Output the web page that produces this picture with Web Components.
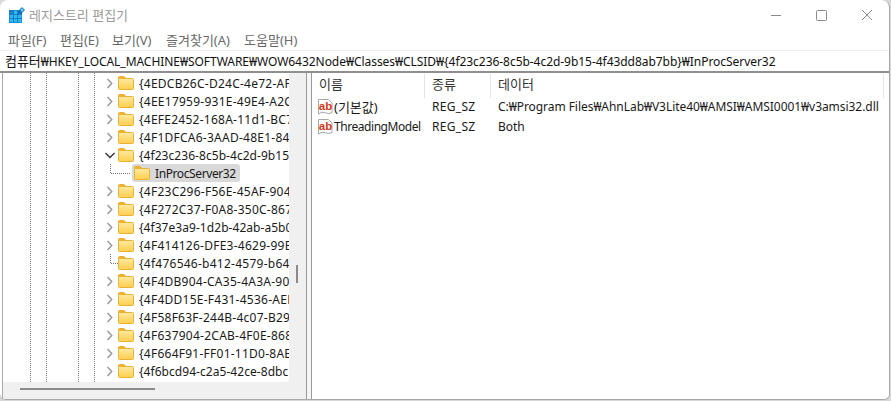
<!DOCTYPE html>
<html lang="ko">
<head>
<meta charset="utf-8">
<title>레지스트리 편집기</title>
<style>
    html, body { margin: 0; padding: 0; height: 100%; background: #d8d8d8; overflow: hidden; }
    body { font: 12px/18px "Noto Sans", "Noto Sans CJK KR", sans-serif; }
</style>
</head>
<body>
<template id="folder-tpl">
    <svg width="16" height="14" viewBox="0 0 16 14">
        <defs>
            <linearGradient id="fg" x1="0" y1="0" x2="0" y2="1">
                <stop offset="0" stop-color="#ffe9a0"/>
                <stop offset="1" stop-color="#ffcf4d"/>
            </linearGradient>
        </defs>
        <path d="M0.5 3V1.5Q0.5 0.5 1.5 0.5H6L8 2.5H12V3Z" fill="#f2b22a" stroke="#eaae2c"/>
        <rect x="0.5" y="2.5" width="15" height="11" rx="1" fill="url(#fg)" stroke="#e9b23a"/>
    </svg>
</template>
<reg-window>
    <reg-titlebar>레지스트리 편집기</reg-titlebar>
    <reg-menu>
        <span style="width:52px">파일(F)</span>
        <span style="width:52px">편집(E)</span>
        <span style="width:54px">보기(V)</span>
        <span style="width:78px">즐겨찾기(A)</span>
        <span>도움말(H)</span>
    </reg-menu>
    <reg-address><span style="font-size:13px">컴퓨터</span>₩HKEY_LOCAL_MACHINE₩SOFTWARE₩WOW6432Node₩Classes₩CLSID₩{4f23c236-8c5b-4c2d-9b15-4f43dd8ab7bb}₩InProcServer32</reg-address>
    <reg-split>
        <reg-tree slot="tree">
            <tree-row>{4EDCB26C-D24C-4e72-AF</tree-row>
            <tree-row>{4EE17959-931E-49E4-A2C</tree-row>
            <tree-row>{4EFE2452-168A-11d1-BC7</tree-row>
            <tree-row>{4F1DFCA6-3AAD-48E1-84</tree-row>
            <tree-row state="open" tight>{4f23c236-8c5b-4c2d-9b15</tree-row>
            <tree-row state="child">InProcServer32</tree-row>
            <tree-row>{4F23C296-F56E-45AF-904</tree-row>
            <tree-row>{4F272C37-F0A8-350C-867</tree-row>
            <tree-row tight>{4f37e3a9-1d2b-42ab-a5b0</tree-row>
            <tree-row>{4F414126-DFE3-4629-99E</tree-row>
            <tree-row state="leaf">{4f476546-b412-4579-b64</tree-row>
            <tree-row>{4F4DB904-CA35-4A3A-90</tree-row>
            <tree-row>{4F4DD15E-F431-4536-AEE</tree-row>
            <tree-row>{4F58F63F-244B-4c07-B29</tree-row>
            <tree-row>{4F637904-2CAB-4F0E-868</tree-row>
            <tree-row>{4F664F91-FF01-11D0-8AE</tree-row>
            <tree-row tight>{4f6bcd94-c2a5-42ce-8dbc</tree-row>
        </reg-tree>
        <reg-list slot="list">
            <list-row name="(기본값)" type="REG_SZ" data="C:₩Program Files₩AhnLab₩V3Lite40₩AMSI₩AMSI0001₩v3amsi32.dll"></list-row>
            <list-row name="ThreadingModel" type="REG_SZ" data="Both"></list-row>
        </reg-list>
    </reg-split>
</reg-window>
<script>
    function define(name, css, html, setup) {
        customElements.define(name, class extends HTMLElement {
            constructor() {
                super();
                this.attachShadow({ mode: 'open' });
                this.shadowRoot.innerHTML = `<style>${css}</style>${html}`;
            }
            connectedCallback() {
                if (setup) setup(this, this.shadowRoot);
            }
        });
    }

    define('reg-window', `
        :host {
            display: flex;
            flex-direction: column;
            width: 889px;
            height: 399px;
            margin-right: 1px;
            background: #fff;
            border-right: 1px solid #a8a8a8;
            border-bottom: 1px solid #a8a8a8;
            border-radius: 8px 8px 6px 6px;
            overflow: hidden;
            color: #1a1a1a;
        }
    `, `<slot></slot>`);

    define('reg-titlebar', `
        :host {
            display: flex;
            align-items: center;
            height: 30px;
            flex: none;
            padding-left: 9px;
            color: #9a9a9a;
            font-size: 13px;
        }
        .logo { margin-right: 4px; }
        .text { flex: 1; }
        .btns { display: flex; }
        .btns svg { display: block; width: 46px; height: 30px; }
    `, `
        <svg class="logo" width="16" height="16" viewBox="0 0 16 16">
            <rect x="0" y="3" width="13" height="13" fill="#0f6fb8"/>
            <path d="M0.5 3.5h3.5v3.5H0.5z" fill="#1b82c8"/>
            <path d="M4.8 3.5h3.5v3.5H4.8zM0.5 7.8h3.5v3.5H0.5zM4.8 7.8h3.5v3.5H4.8zM9.1 7.8h3.5v3.5H9.1zM0.5 12.1h3.5v3.5H0.5zM4.8 12.1h3.5v3.5H4.8zM9.1 12.1h3.5v3.5H9.1z" fill="#2db8f6"/>
            <path d="M13 0L16 3L13 6L10 3Z" fill="#2a8fd0"/>
            <circle cx="13" cy="3" r="1" fill="#a9defa"/>
        </svg>
        <span class="text"><slot></slot></span>
        <div class="btns">
            <svg viewBox="0 0 46 30"><path d="M20 15.5h10" stroke="#8a8a8a" fill="none"/></svg>
            <svg viewBox="0 0 46 30"><rect x="19.5" y="10.5" width="10" height="10" rx="1" stroke="#8a8a8a" fill="none"/></svg>
            <svg viewBox="0 0 46 30"><path d="M19 10l10 10M29 10L19 20" stroke="#8a8a8a" fill="none"/></svg>
        </div>
    `);

    define('reg-menu', `
        :host {
            display: flex;
            height: 20px;
            flex: none;
            align-items: center;
            padding-left: 8px;
            color: #6a6a6a;
            font-size: 13px;
            border-bottom: 1px solid #efefef;
        }
        ::slotted(span) { display: block; }
    `, `<slot></slot>`);

    define('reg-address', `
        :host {
            display: block;
            height: 20px;
            flex: none;
            padding-left: 5px;
            line-height: 20px;
            letter-spacing: -0.045px;
            white-space: nowrap;
            overflow: hidden;
            border-bottom: 2px solid #8f8f8f;
            color: #111;
        }
    `, `<slot></slot>`);

    define('reg-split', `
        :host {
            display: flex;
            flex: 1;
            min-height: 0;
            padding-left: 2px;
        }
        .left {
            display: grid;
            grid-template: 1fr 17px / 286px 17px;
            width: 303px;
            flex: none;
            border-left: 1px solid #a8a8a8;
            border-right: 1px solid #9a9a9a;
            background: #f0f0f0;
            min-height: 0;
        }
        .tree { min-height: 0; overflow: hidden; background: #fff; border-radius: 0 0 4px 0; }
        .vbar { grid-row: 1 / 3; grid-column: 2; padding: 192px 0 0 7px; box-sizing: border-box; }
        .vbar i { display: block; width: 2px; height: 18px; background: #8a8a8a; }
        .hbar { padding: 6px 0 0 17px; box-sizing: border-box; }
        .hbar i { display: block; width: 135px; height: 2px; background: #8a8a8a; }
        .gap { width: 4px; flex: none; background: #f5f5f5; }
        .right { flex: 1; min-width: 0; border-left: 1px solid #9a9a9a; background: #fff; }
    `, `
        <div class="left">
            <div class="tree"><slot name="tree"></slot></div>
            <div class="vbar"><i></i></div>
            <div class="hbar"><i></i></div>
        </div>
        <div class="gap"></div>
        <div class="right"><slot name="list"></slot></div>
    `);

    // dotted guide lines of the parent levels run through the whole pane
    const dots = 'linear-gradient(#7a7a7a 1px, transparent 1px)';
    define('reg-tree', `
        :host {
            display: block;
            height: 100%;
            padding-top: 1px;
            box-sizing: border-box;
            background-image: ${dots}, ${dots}, ${dots}, ${dots};
            background-size: 1px 2px;
            background-repeat: repeat-y;
            background-position: 27px 0, 43px 0, 75px 0, 91px 0;
            overflow: hidden;
        }
    `, `<slot></slot>`);

    define('tree-row', `
        :host {
            display: flex;
            align-items: center;
            height: 18px;
            padding-left: 103px;
            white-space: nowrap;
            color: #1a1a1a;
            letter-spacing: 0.25px;
        }
        :host([tight]) { letter-spacing: 0.05px; }
        .tw { width: 12px; height: 18px; flex: none; }
        .tw svg { display: block; overflow: visible; }
        .sel { display: flex; align-items: center; gap: 5px; }
        .sel svg { flex: none; }
        .label { padding-top: 1px; }
        :host([state=child]) { padding-left: 107px; letter-spacing: -0.4px; }
        :host([state=child]) .tw { width: 22px; }
        :host([state=child]) .sel {
            background: #d9d9d9;
            border-radius: 3px;
            height: 18px;
            padding: 0 4px 0 2px;
        }
    `, `
        <span class="tw"></span>
        <span class="sel"><span id="f" style="display:flex"></span><span class="label"><slot></slot></span></span>
    `, (el, root) => {
        const state = el.getAttribute('state');
        const tw = root.querySelector('.tw');
        root.querySelector('#f').appendChild(document.getElementById('folder-tpl').content.cloneNode(true));
        if (state === 'open') {
            tw.innerHTML = '<svg width="12" height="18"><path d="M-0.5 7L4 11.5L8.5 7" fill="none" stroke="#333" stroke-width="1.4"/></svg>';
        } else if (state === 'child') {
            tw.innerHTML = '<svg width="22" height="18" shape-rendering="crispEdges"><path d="M0.5 0V9.5H20" fill="none" stroke="#777" stroke-dasharray="1 1"/></svg>';
        } else if (state === 'leaf') {
            tw.innerHTML = '<svg width="12" height="18" shape-rendering="crispEdges"><path d="M4.5 0V9.5H12" fill="none" stroke="#777" stroke-dasharray="1 1"/></svg>';
        } else {
            tw.innerHTML = '<svg width="12" height="18"><path d="M1.5 5L5.7 9.5L1.5 14" fill="none" stroke="#9a9a9a" stroke-width="1.5"/></svg>';
        }
    });

    define('reg-list', `
        :host { display: block; height: 100%; }
        .head {
            display: grid;
            grid-template-columns: 113px 66px 1fr;
            height: 24px;
            color: #333;
            font-size: 13px;
        }
        .head span {
            display: flex;
            align-items: center;
            padding: 0 0 5px 7px;
            border-right: 1px solid #e5e5e5;
            height: 24px;
            box-sizing: border-box;
            margin-top: 1px;
        }
        .head span:last-child { margin-right: 5px; }
    `, `
        <div class="head"><span>이름</span><span>종류</span><span>데이터</span></div>
        <slot></slot>
    `);

    define('list-row', `
        :host {
            display: grid;
            grid-template-columns: 113px 66px 1fr;
            height: 20px;
            align-items: center;
            white-space: nowrap;
        }
        .name { display: flex; align-items: center; padding-left: 5px; overflow: hidden; }
        .name svg { flex: none; margin-right: 1px; }
        #n { letter-spacing: -0.45px; }
        #n.ko { letter-spacing: 0; font-size: 13px; }
        .type, .data { padding-left: 7px; }
        .type { letter-spacing: 0.3px; }
        .data { letter-spacing: -0.05px; }
    `, `
        <span class="name">
            <svg width="16" height="16" viewBox="0 0 16 16">
                <path d="M1.5 0.5H11.5L15 4V13.5Q12 15.5 8.5 13.8T1.5 15Z" fill="#fff" stroke="#a8a8a8"/>
                <text x="1.8" y="10.5" font-family="Liberation Sans, sans-serif" font-size="11.5" font-weight="700" fill="#d5391c">ab</text>
            </svg>
            <span id="n"></span>
        </span>
        <span class="type" id="t"></span>
        <span class="data" id="d"></span>
    `, (el, root) => {
        const n = root.getElementById('n');
        n.textContent = el.getAttribute('name');
        if (/[가-힣]/.test(n.textContent)) n.className = 'ko';
        root.getElementById('t').textContent = el.getAttribute('type');
        root.getElementById('d').textContent = el.getAttribute('data');
    });
</script>
</body>
</html>
